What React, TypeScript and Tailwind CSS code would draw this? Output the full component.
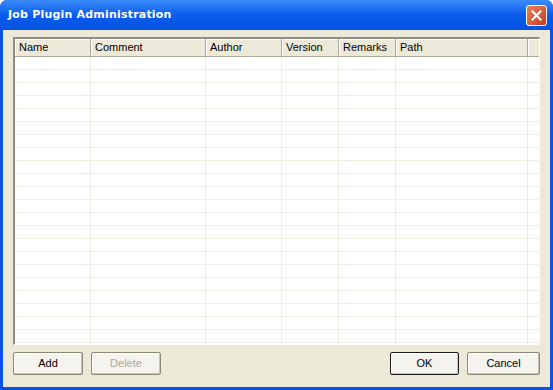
import React from "react";

const cols = [
  { label: "Name", w: "w-[76px]" },
  { label: "Comment", w: "w-[115px]" },
  { label: "Author", w: "w-[76px]" },
  { label: "Version", w: "w-[57px]" },
  { label: "Remarks", w: "w-[57px]" },
  { label: "Path", w: "w-[132px]" },
];

const ui = { fontFamily: '"Liberation Sans", Arial, sans-serif' };

const Btn = ({ label, disabled, def }: { label: string; disabled?: boolean; def?: boolean }) => (
  <button
    className={`flex h-[23px] w-full items-center justify-center rounded-[2px] border bg-[#F4F3EE] text-[11px] ${
      def ? "border-[#1C1C1C]" : "border-[#8A8779]"
    } ${disabled ? "text-[#ACA899]" : "text-black"} shadow-[inset_-1px_-1px_0_#C9C6B8,inset_1px_1px_0_#FFFFFF]`}
  >
    {label}
  </button>
);

export default function App() {
  const rows = Array.from({ length: 23 });
  return (
    <div className="flex h-[390px] w-[553px] flex-col overflow-hidden rounded-t-[7px] bg-[#0A52E6]" style={ui}>
      <div className="flex h-[30px] shrink-0 items-center justify-between bg-gradient-to-b from-[#3A8AF8] via-[#0A5CEC] to-[#0553E3] pl-[8px] pr-[6px]">
        <span
          className="text-[11px] font-bold tracking-[0.2px] text-white"
          style={{ fontFamily: '"DejaVu Sans", sans-serif' }}
        >
          Job Plugin Administration
        </span>
        <div className="flex h-[21px] w-[21px] items-center justify-center rounded-[3px] border border-white bg-gradient-to-br from-[#E8825E] to-[#C8381A]">
          <svg width="11" height="11" viewBox="0 0 11 11">
            <path d="M1.5 1.5 L9.5 9.5 M9.5 1.5 L1.5 9.5" stroke="#fff" strokeWidth="2" strokeLinecap="square" />
          </svg>
        </div>
      </div>
      <div className="mx-[3px] mb-[3px] flex flex-1 flex-col bg-[#ECE9D8] px-[10px] pt-[7px]">
        <div className="flex h-[308px] flex-col overflow-hidden border-t-2 border-l-2 border-r border-b border-t-[#8E8C83] border-l-[#8E8C83] border-r-white border-b-white bg-white">
          <div className="flex h-[18px] shrink-0 border-b border-[#ACA899] bg-[#ECE9D8] text-[11px] text-black">
            {cols.map((c) => (
              <div
                key={c.label}
                className={`${c.w} flex shrink-0 items-center border-r border-[#ACA899] pl-[4px] shadow-[inset_1px_1px_0_#FFFFFF]`}
              >
                {c.label}
              </div>
            ))}
            <div className="flex-1 shadow-[inset_1px_1px_0_#FFFFFF]" />
          </div>
          <div className="flex-1 overflow-hidden">
            {rows.map((_, i) => (
              <div key={i} className="flex h-[13px] border-b border-[#EFEDE4]">
                {cols.map((c) => (
                  <div key={c.label} className={`${c.w} shrink-0 border-r border-[#EFEDE4]`} />
                ))}
              </div>
            ))}
          </div>
        </div>
        <div className="mt-[7px] flex items-center">
          <div className="w-[70px]">
            <Btn label="Add" />
          </div>
          <div className="ml-[8px] w-[70px]">
            <Btn label="Delete" disabled />
          </div>
          <div className="ml-auto w-[69px]">
            <Btn label="OK" def />
          </div>
          <div className="ml-[8px] w-[73px]">
            <Btn label="Cancel" />
          </div>
        </div>
      </div>
    </div>
  );
}
